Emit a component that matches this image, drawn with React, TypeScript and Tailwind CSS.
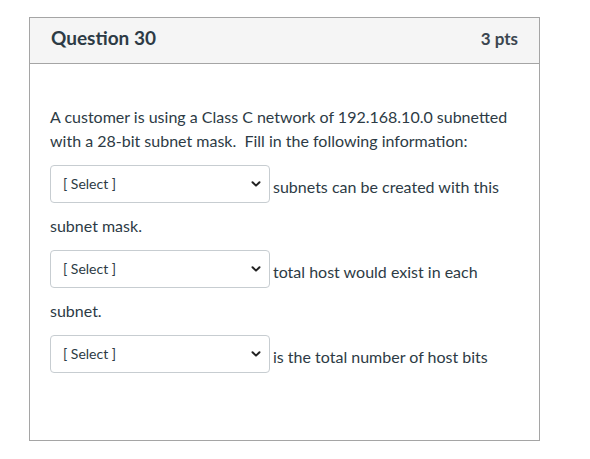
function FauxSelect() {
  return (
    <span className="mb-[11px] mr-[3px] inline-flex h-[38px] w-[220px] items-center justify-between rounded-[4px] border border-[#c7cdd1] bg-white pl-[12px] pr-[8px] align-[4px] text-[14px] text-[#2d3b45]">
      <span>[ Select ]</span>
      <svg width="10" height="10" viewBox="0 0 10 10">
        <path d="M1.5 3.2 L5 6.6 L8.5 3.2" fill="none" stroke="#222" strokeWidth="2" strokeLinecap="round" strokeLinejoin="round" />
      </svg>
    </span>
  );
}

export default function App() {
  return (
    <div className="min-h-[459px] w-[590px] bg-white pl-[29px] pt-[17px]" style={{ fontFamily: 'Lato, "Liberation Sans", sans-serif' }}>
      <div className="flex h-[424px] w-[511px] flex-col border border-[#a5a5a5] bg-white text-[#2d3b45]">
        {/* Header */}
        <div className="flex h-[46px] items-center justify-between border-b border-[#a5a5a5] bg-[#f5f5f5] pb-[4px] pl-[21px] pr-[21px]">
          <span className="text-[19px] font-bold">Question 30</span>
          <span className="text-[17px] font-bold text-[#3b4650]">3 pts</span>
        </div>

        {/* Body */}
        <div className="px-[20px] pt-[41px] text-[16px] leading-[24px]">
          <p>
            A customer is using a Class C network of 192.168.10.0 subnetted with a 28-bit subnet mask.&nbsp; Fill in the following information:
          </p>
          <p className="mt-[12px]">
            <FauxSelect />subnets can be created with this subnet mask.
          </p>
          <p className="mt-[12px]">
            <FauxSelect />total host would exist in each subnet.
          </p>
          <p className="mt-[12px]">
            <FauxSelect />is the total number of host bits
          </p>
        </div>
      </div>
    </div>
  );
}
